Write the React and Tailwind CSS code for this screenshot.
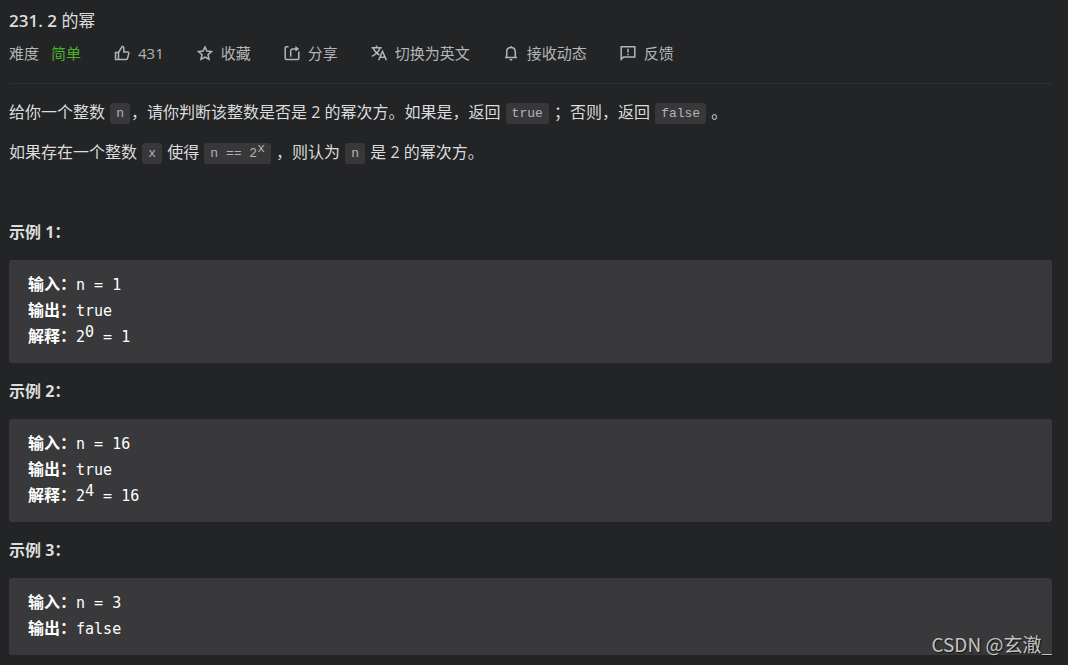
import React from 'react';

const iconProps = {
  width: 16,
  height: 16,
  viewBox: '0 0 16 16',
  fill: 'none',
  stroke: 'currentColor',
  strokeWidth: 1.5,
  'aria-hidden': true,
};

const LikeIcon = () => (
  <svg {...iconProps}>
    <path d="M1.500 7.500h3v7h-3zM4.500 14.500h7.800c.6 0 1-.3 1.200-.9l1.300-5.200c.2-.9-.2-1.400-1.100-1.400H9.800V3c0-.9-.3-1.400-1-1.500L8.200 1.400 4.500 7.500" />
  </svg>
);

const StarIcon = () => (
  <svg {...iconProps}>
    <path d="M8 2l1.900 4.100 4.500.5-3.400 3.100 1 4.500L8 12l-4 2.200 1-4.500L1.600 6.600l4.500-.5z" />
  </svg>
);

const ShareIcon = () => (
  <svg {...iconProps}>
    <path d="M4.500 1.800H2.200c-.6 0-1 .4-1 1v10.700c0 .6.4 1 1 1h11.600c.6 0 1-.4 1-1V6.500" />
    <path d="M6.700 11.800V6.200c0-1.400.8-2.200 2.300-2.200h4" />
    <path d="M11.400 1l3.800 3-3.800 2.600z" fill="currentColor" stroke="none" />
  </svg>
);

const TranslateIcon = () => (
  <svg {...iconProps}>
    <path d="M.5 2.700h10.200M5.500.6v2.100M2.200 3c1.200 3.200 3.400 5.400 6.300 7M9 3C7.800 6.400 4.600 9.600.8 11.400" />
    <path d="M7.700 15.200L11.500 6.300l3.900 8.900M9 12.200h5.100" />
  </svg>
);

const BellIcon = () => (
  <svg {...iconProps}>
    <path d="M3.700 12.400V7c0-2.700 1.700-4.500 4.300-4.500s4.300 1.800 4.300 4.500v5.400M2 12.500h12M8 1v1.500" />
    <path d="M6.400 14h3.200c0 .9-.6 1.500-1.600 1.500S6.400 14.900 6.400 14z" fill="currentColor" stroke="none" />
  </svg>
);

const FeedbackIcon = () => (
  <svg {...iconProps}>
    <path d="M1.200 14.300V1.700h13.600v10.400H3.500z" />
    <path d="M8 3.800v3.600M8 8.700v1.500" />
  </svg>
);

const actions = [
  { label: '431', icon: LikeIcon },
  { label: '收藏', icon: StarIcon },
  { label: '分享', icon: ShareIcon },
  { label: '切换为英文', icon: TranslateIcon },
  { label: '接收动态', icon: BellIcon },
  { label: '反馈', icon: FeedbackIcon },
];

const examples = [
  { input: 'n = 1', output: 'true', power: '0', result: '1' },
  { input: 'n = 16', output: 'true', power: '4', result: '16' },
  { input: 'n = 3', output: 'false' },
];

const Code = ({ children }) => (
  <code className="inline-block h-[21px] px-[6px] mx-px rounded-[3px] bg-[#38383a] text-[#b4b4b6] text-[13px] leading-[22px] align-middle font-['Liberation_Mono',monospace]">
    {children}
  </code>
);

const Label = ({ children }) => (
  <strong className="text-base leading-none font-bold font-['Noto_Sans_CJK_SC',sans-serif]">{children}</strong>
);

const Example = ({ index, example }) => (
  <section>
    <h2 className="mt-4 font-bold">示例 {index}：</h2>
    <pre className="mt-4 px-[19px] pt-3 pb-[13px] rounded-[3px] bg-[#39393b] text-white text-[15px] leading-[26px] font-['DejaVu_Sans_Mono',monospace]">
      <div className="h-[26px]"><Label>输入：</Label>{example.input}</div>
      <div className="h-[26px]"><Label>输出：</Label>{example.output}</div>
      {example.power && (
        <div className="h-[26px]">
          <Label>解释：</Label>2<sup className="text-[15px] -top-[5px]">{example.power}</sup> = {example.result}
        </div>
      )}
    </pre>
  </section>
);

const App = () => {
  return (
    <div className="relative min-h-screen bg-[#222425] pl-[9px] pr-4 pt-[9px] pb-[10px] text-base leading-6 text-[#dcdcdd] font-['Open_Sans','Noto_Sans_CJK_SC',sans-serif]">
      <header className="border-b border-[#2c2e2f] pb-[18px]">
        <h1 className="text-[17px] font-semibold">
          231. 2 <span className="font-normal">的幂</span>
        </h1>
        <div className="mt-2 flex flex-wrap items-center gap-x-[33px] text-[15px] text-[#b3b5b7]">
          <div className="flex gap-3">
            <span>难度</span>
            <span className="text-[#4cb028]">简单</span>
          </div>
          {actions.map(({ label, icon: Icon }) => (
            <button key={label} type="button" className="flex items-center gap-2 cursor-pointer">
              <Icon />
              {label}
            </button>
          ))}
        </div>
      </header>

      <main>
        <p className="mt-4">
          给你一个整数 <Code>n</Code>，请你判断该整数是否是 2 的幂次方。如果是，返回 <Code>true</Code> ；否则，返回 <Code>false</Code> 。
        </p>
        <p className="mt-4">
          如果存在一个整数 <Code>x</Code> 使得 <Code>n == 2<sup className="text-[13px] -top-[5px]">x</sup></Code> ，则认为 <Code>n</Code> 是 2 的幂次方。
        </p>
        <p className="mt-4">&nbsp;</p>
        {examples.map((example, i) => (
          <Example key={example.input} index={i + 1} example={example} />
        ))}
      </main>

      <div className="absolute right-4 bottom-[9px] text-[19px] text-[#c4c4c4] font-['Noto_Sans_CJK_SC',sans-serif] [text-shadow:1px_1px_1px_#111]">
        CSDN @玄澈_
      </div>
    </div>
  );
};

export default App;
